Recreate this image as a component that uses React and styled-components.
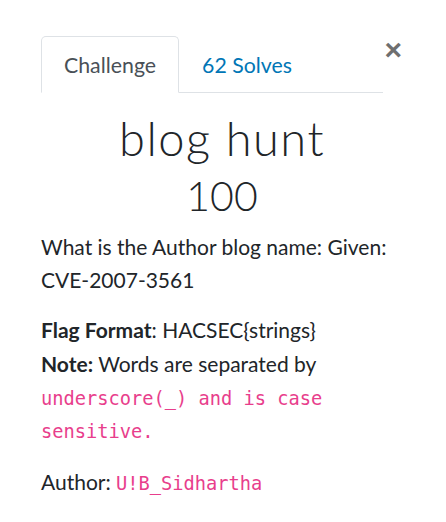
import styled, { createGlobalStyle } from 'styled-components';

const GlobalStyle = createGlobalStyle`
  body {
    margin: 0;
    background: #fff;
    font-family: Lato, "Liberation Sans", sans-serif;
    color: #212529;
  }
`;

export default function App() {
  return (
    <>
      <GlobalStyle />
      <Modal>
        <CloseButton aria-label="Close">×</CloseButton>
        <Tabs>
          <Tab $active>Challenge</Tab>
          <Tab>62 Solves</Tab>
        </Tabs>
        <Header>
          <Title>blog hunt</Title>
          <Points>100</Points>
        </Header>
        <Description>
          <Paragraph>What is the Author blog name: Given: CVE-2007-3561</Paragraph>
          <Paragraph>
            <strong>Flag Format</strong>: HACSEC{'{'}strings{'}'}
            <br />
            <strong>Note:</strong> Words are separated by{' '}
            <Code>underscore(_) and is case sensitive.</Code>
          </Paragraph>
          <Paragraph $last>
            Author: <Code>U!B_Sidhartha</Code>
          </Paragraph>
        </Description>
      </Modal>
    </>
  );
}

const Modal = styled.div`
  position: relative;
  width: 446px;
  height: 522px;
  box-sizing: border-box;
  padding: 36px 43px 0 41px;
`;

const CloseButton = styled.button`
  position: absolute;
  top: 35px;
  right: 44px;
  padding: 0;
  border: none;
  background: none;
  font-family: "Liberation Sans", sans-serif;
  font-size: 30px;
  font-weight: 700;
  line-height: 1;
  color: #6f6f6f;
  cursor: pointer;
`;

const Tabs = styled.div`
  display: flex;
  margin-right: 20px;
  border-bottom: 1px solid #dee2e6;
`;

const Tab = styled.div`
  margin-bottom: -1px;
  padding: 0 22px;
  height: 55px;
  display: flex;
  align-items: center;
  font-size: 21.3px;
  border: 1px solid ${(p) => (p.$active ? '#dee2e6' : 'transparent')};
  border-bottom-color: ${(p) => (p.$active ? '#fff' : 'transparent')};
  border-radius: 5px 5px 0 0;
  background: ${(p) => (p.$active ? '#fff' : 'transparent')};
  color: ${(p) => (p.$active ? '#495057' : '#0076b6')};
`;

const Header = styled.div`
  display: flex;
  flex-direction: column;
  align-items: center;
  margin-top: 16px;
`;

const Title = styled.h2`
  margin: 0;
  font-size: 47px;
  font-weight: 300;
  letter-spacing: 1.5px;
  line-height: 58px;
`;

const Points = styled.h3`
  margin: 0;
  font-size: 41px;
  font-weight: 300;
  line-height: 58px;
`;

const Description = styled.div`
  margin-top: 5px;
  font-size: 21px;
  line-height: 33.3px;
`;

const Paragraph = styled.p`
  margin: ${(p) => (p.$last ? '19px 0 0' : '0 0 16.7px')};
`;

const Code = styled.code`
  font-family: "DejaVu Sans Mono", monospace;
  font-size: 18.7px;
  line-height: 1;
  color: #e83e8c;
`;
